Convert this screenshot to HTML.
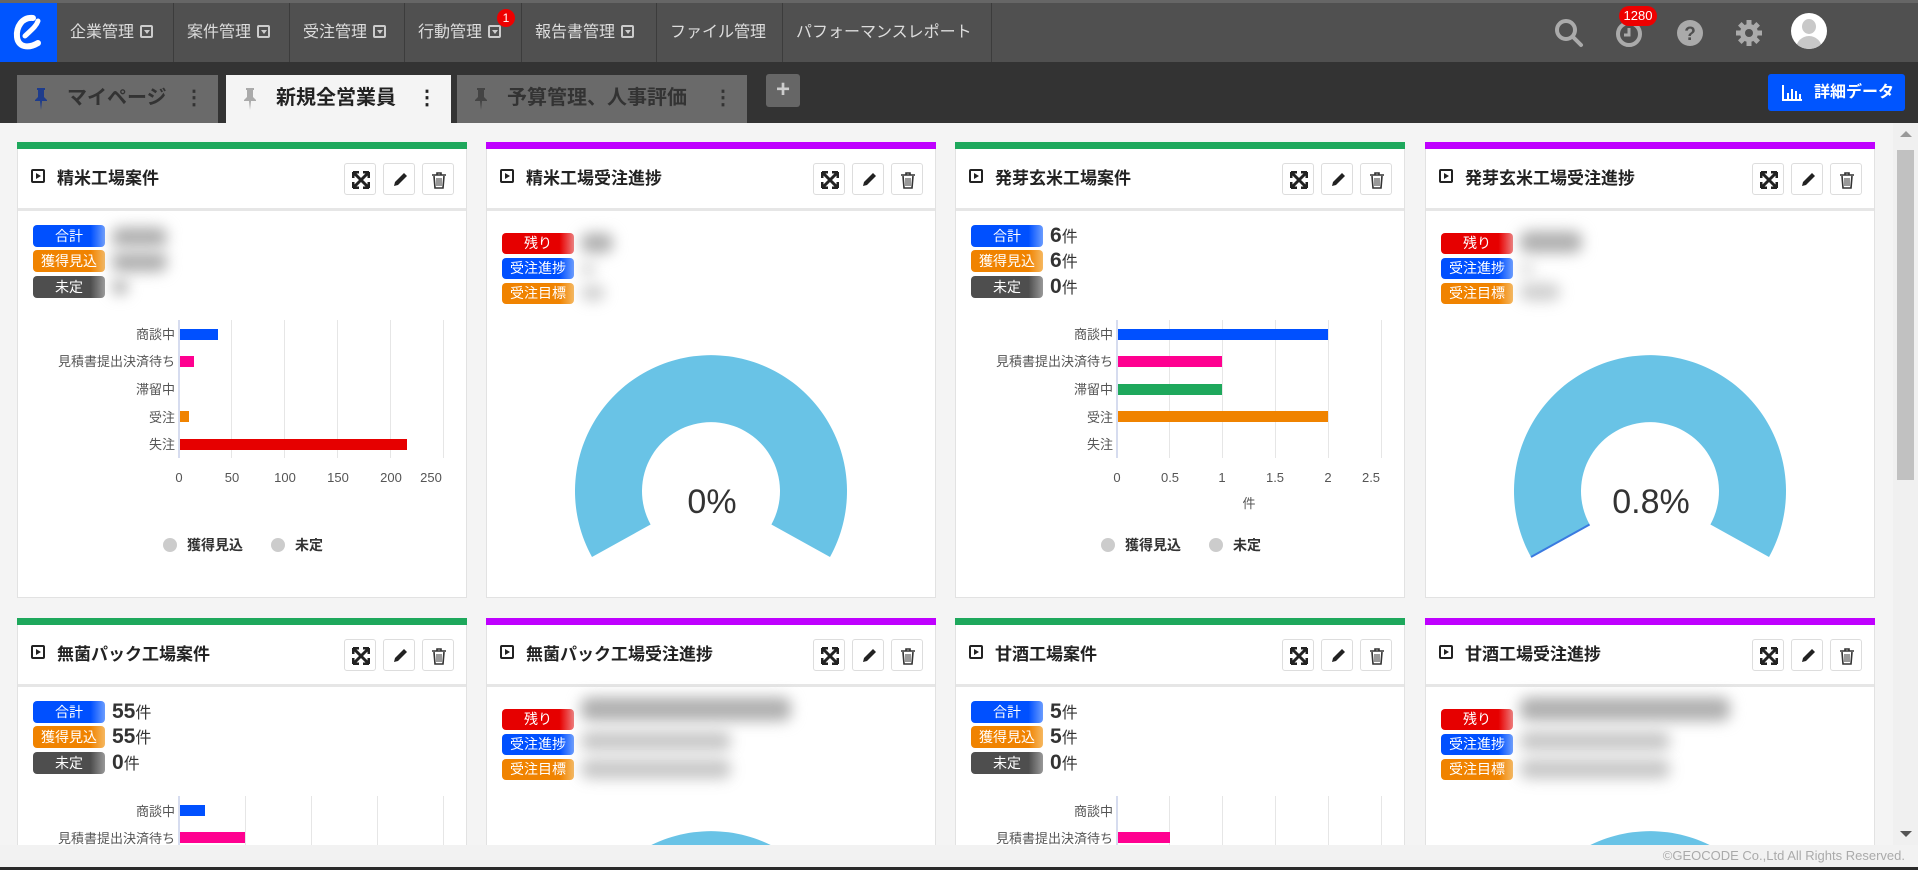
<!DOCTYPE html>
<html><head><meta charset="utf-8"><style>
*{box-sizing:border-box;margin:0;padding:0}
html,body{width:1918px;height:870px;overflow:hidden}
body{background:#f4f4f4;font-family:"Liberation Sans","Noto Sans CJK JP",sans-serif;position:relative;color:#333}
.nav{position:absolute;left:0;top:0;width:1918px;height:62px;background:#505050;border-top:3px solid #666}
.logo{position:absolute;left:0;top:0;width:57px;height:59px;background:#0055ff}
.ni{position:absolute;top:0;height:59px;line-height:59px;color:#ddd;font-size:16px;padding-left:13px;border-right:1px solid #3c3c3c}
.dd{display:inline-block;width:13px;height:13px;border:2px solid #ccc;border-radius:2px;vertical-align:-1px;margin-left:6px;position:relative}
.dd:after{content:"";position:absolute;left:2px;top:3px;border:3px solid transparent;border-top:4px solid #ccc}
.tabs{position:absolute;left:0;top:62px;width:1918px;height:61px;background:#333}
.tab{position:absolute;top:13px;height:48px;line-height:46px;font-size:20px;font-weight:bold;padding-left:50px}
.tab svg{position:absolute;left:18px;top:13px}
.tab .k{position:absolute;right:14px;top:0}
.sb{position:absolute;right:0;top:123px;width:25px;height:722px;background:#f0f0f0}
.card{position:absolute;width:450px;height:456px;background:#fff;border:1px solid #e2e2e2}
.bar{position:absolute;left:-1px;right:-1px;top:-1px;height:7px}
.hd{position:absolute;left:0;right:0;top:6px;height:62px;border-bottom:3px solid #e6e6e6}
.ttl{position:absolute;left:39px;top:15px;font-size:17px;font-weight:bold;color:#222}
.pi{position:absolute;left:13px;top:20px;width:14px;height:14px;border:2px solid #222;border-radius:2px}
.pi:after{content:"";position:absolute;left:3px;top:2px;border:3px solid transparent;border-left:5px solid #222}
.btn{position:absolute;top:14px;width:32px;height:32px;border:1px solid #ddd;border-radius:3px;background:#fff}
.btn svg{position:absolute;left:7px;top:7px}
.bd{position:absolute;left:15px;width:72px;height:22px;border-radius:4px;color:#fff;font-size:14px;text-align:center;line-height:22px}
.bl{background:linear-gradient(90deg,#0050ff 80%,#6a9cff)}.or{background:linear-gradient(90deg,#f08300 80%,#f6b860)}.dk{background:linear-gradient(90deg,#4e4e4e 80%,#999)}.rd{background:linear-gradient(90deg,#e60000 80%,#f07a7a)}
.cnt{position:absolute;left:94px;font-size:21px;font-weight:bold;color:#333;line-height:24px}
.cnt small{font-size:16px;font-weight:normal}
.blur{position:absolute;background:#b0b0b0;filter:blur(7px);border-radius:8px}
.lab{position:absolute;right:291px;font-size:13px;color:#555;text-align:right;white-space:nowrap;line-height:15px}
.grid{position:absolute;top:177px;width:1px;height:138px;background:#e6e6e6}
.ax{position:absolute;left:160px;top:177px;width:2px;height:138px;background:#d6dcef}
.tk{position:absolute;top:327px;font-size:13px;color:#555;transform:translateX(-50%)}
.hb{position:absolute;left:162px;height:11px}
.lg{position:absolute;top:392px;font-size:14px;color:#333;font-weight:bold}
.lg i{display:inline-block;width:14px;height:14px;border-radius:50%;background:#ccc;vertical-align:-2px;margin-right:10px}
.pct{position:absolute;left:0;width:450px;text-align:center;top:340px;font-size:34px;color:#333}
</style></head><body>
<div class="nav">
<div class="logo"><svg width="57" height="59" viewBox="0 0 57 59"><path d="M33 15 C22 14 16 24 17 34 C18 44 28 46 38 40" stroke="#fff" stroke-width="6" fill="none" stroke-linecap="round"/><path d="M25 33 C30 28 36 24 38 18" stroke="#fff" stroke-width="5" fill="none" stroke-linecap="round"/></svg></div>
<div class="ni" style="left:57px;width:117px">企業管理<span class="dd"></span></div>
<div class="ni" style="left:174px;width:116px">案件管理<span class="dd"></span></div>
<div class="ni" style="left:290px;width:115px">受注管理<span class="dd"></span></div>
<div class="ni" style="left:405px;width:117px">行動管理<span class="dd"></span></div>
<div style="position:absolute;left:497px;top:6px;width:18px;height:18px;border-radius:50%;background:#e00;color:#fff;font-size:12px;text-align:center;line-height:18px">1</div>
<div class="ni" style="left:522px;width:135px">報告書管理<span class="dd"></span></div>
<div class="ni" style="left:657px;width:126px">ファイル管理</div>
<div class="ni" style="left:783px;width:209px">パフォーマンスレポート</div>
<svg style="position:absolute;left:1554px;top:15px" width="30" height="30" viewBox="0 0 30 30"><circle cx="12" cy="12" r="9" stroke="#aaa" stroke-width="4" fill="none"/><path d="M19 19 L27 27" stroke="#aaa" stroke-width="4" stroke-linecap="round"/></svg>
<svg style="position:absolute;left:1615px;top:17px" width="28" height="28" viewBox="0 0 28 28"><circle cx="14" cy="14" r="11" stroke="#aaa" stroke-width="4" fill="none"/><path d="M14 8 V15 H9" stroke="#aaa" stroke-width="3" fill="none"/></svg>
<div style="position:absolute;left:1619px;top:3px;width:38px;height:20px;border-radius:10px;background:#e00;color:#fff;font-size:13px;text-align:center;line-height:20px">1280</div>
<svg style="position:absolute;left:1676px;top:16px" width="28" height="28" viewBox="0 0 28 28"><circle cx="14" cy="14" r="13" fill="#aaa"/><text x="14" y="21" text-anchor="middle" font-size="19" font-weight="bold" fill="#505050" font-family="Liberation Sans">?</text></svg>
<svg style="position:absolute;left:1735px;top:16px" width="28" height="28" viewBox="0 0 28 28"><g fill="#aaa"><circle cx="14" cy="14" r="9"/><g stroke="#aaa" stroke-width="5"><path d="M14 1V27M1 14H27M4.8 4.8L23.2 23.2M23.2 4.8L4.8 23.2"/></g></g><circle cx="14" cy="14" r="4" fill="#505050"/></svg>
<div style="position:absolute;left:1791px;top:10px;width:36px;height:36px;border-radius:50%;background:#fff;overflow:hidden"><div style="position:absolute;left:11px;top:6px;width:14px;height:15px;border-radius:50%;background:#c8c8c8"></div><div style="position:absolute;left:5px;top:23px;width:26px;height:20px;border-radius:13px 13px 0 0;background:#c8c8c8"></div></div>
</div>
<div class="tabs">
<div class="tab" style="left:17px;width:201px;background:#6a6a6a;color:#333"><svg width="12" height="22" viewBox="0 0 12 22"><path d="M2 0H10V2H9V9L12 12V13H0V12L3 9V2H2Z M5 13H7L6 22Z" fill="#1e3c8c"/></svg>マイページ<span class="k">⋮</span></div>
<div class="tab" style="left:226px;width:225px;background:#f4f4f4;color:#222"><svg width="12" height="22" viewBox="0 0 12 22"><path d="M2 0H10V2H9V9L12 12V13H0V12L3 9V2H2Z M5 13H7L6 22Z" fill="#aaa"/></svg>新規全営業員<span class="k">⋮</span></div>
<div class="tab" style="left:457px;width:290px;background:#6a6a6a;color:#333"><svg width="12" height="22" viewBox="0 0 12 22"><path d="M2 0H10V2H9V9L12 12V13H0V12L3 9V2H2Z M5 13H7L6 22Z" fill="#444"/></svg>予算管理、人事評価<span class="k">⋮</span></div>
<div style="position:absolute;left:766px;top:12px;width:34px;height:33px;background:#666;border-radius:3px;color:#ccc;font-size:24px;font-weight:bold;text-align:center;line-height:32px">+</div>
<div style="position:absolute;left:1768px;top:12px;width:137px;height:37px;background:#0055ff;border-radius:3px;color:#fff;font-size:16px;font-weight:bold;line-height:37px;padding-left:46px"><svg style="position:absolute;left:14px;top:11px" width="20" height="16" viewBox="0 0 20 16"><path d="M1 0V15H20" stroke="#fff" stroke-width="2" fill="none"/><path d="M5 8h2v6H5zM9 4h2v10H9zM13 6h2v8h-2zM17 9h2v5h-2z" fill="#fff"/></svg>詳細データ</div>
</div>
<div class="sb"><div style="position:absolute;left:7px;top:8px;border:6px solid transparent;border-bottom:6px solid #999;border-top:0"></div><div style="position:absolute;left:4px;top:27px;width:17px;height:330px;background:#c1c1c1"></div><div style="position:absolute;left:7px;top:708px;border:6px solid transparent;border-top:6px solid #555;border-bottom:0"></div></div>
<div style="position:absolute;left:0;top:123px;width:1893px;height:722px;overflow:hidden">
<!-- row 1 -->
<div class="card" style="left:17px;top:19px">
<div class="bar" style="background:#1ea85c"></div>
<div class="hd"><div class="pi"></div><div class="ttl">精米工場案件</div>
<div class="btn" style="left:326px"><svg width="18" height="18" viewBox="0 0 18 18"><path d="M2 2L16 16M16 2L2 16M1 1h6M1 1v6M17 1h-6M17 1v6M1 17h6M1 17v-6M17 17h-6M17 17v-6" stroke="#222" stroke-width="3"/></svg></div>
<div class="btn" style="left:365px"><svg width="18" height="18" viewBox="0 0 18 18"><path d="M3 15L4 11L13 2L16 5L7 14Z" fill="#222"/></svg></div>
<div class="btn" style="left:404px"><svg width="18" height="18" viewBox="0 0 18 18"><path d="M2 4H16M7 4V2H11V4M4 5L5 17H13L14 5" stroke="#333" stroke-width="1.6" fill="none"/><path d="M7 7V15M9 7V15M11 7V15" stroke="#333" stroke-width="1"/></svg></div></div>
<div class="bd bl" style="top:82px">合計</div><div class="bd or" style="top:107px">獲得見込</div><div class="bd dk" style="top:133px">未定</div>
<div class="blur" style="left:94px;top:84px;width:55px;height:20px"></div><div class="blur" style="left:94px;top:109px;width:55px;height:20px"></div><div class="blur" style="left:94px;top:136px;width:16px;height:16px"></div>
<div class="lab" style="top:184px">商談中</div><div class="lab" style="top:211px">見積書提出決済待ち</div><div class="lab" style="top:239px">滞留中</div><div class="lab" style="top:267px">受注</div><div class="lab" style="top:294px">失注</div>
<div class="grid" style="left:213px"></div><div class="grid" style="left:266px"></div><div class="grid" style="left:319px"></div><div class="grid" style="left:372px"></div><div class="grid" style="left:425px"></div>
<div class="ax"></div>
<div class="hb" style="top:186px;width:38px;background:#0050ff"></div><div class="hb" style="top:213px;width:14px;background:#ff0090"></div><div class="hb" style="top:268px;width:9px;background:#f08300"></div><div class="hb" style="top:296px;width:227px;background:#e60000"></div>
<div class="tk" style="left:161px">0</div><div class="tk" style="left:214px">50</div><div class="tk" style="left:267px">100</div><div class="tk" style="left:320px">150</div><div class="tk" style="left:373px">200</div><div class="tk" style="left:413px">250</div>
<div class="lg" style="left:145px"><i></i>獲得見込</div><div class="lg" style="left:253px"><i></i>未定</div>
</div>

<div class="card" style="left:486px;top:19px">
<div class="bar" style="background:#bf00ff"></div>
<div class="hd"><div class="pi"></div><div class="ttl">精米工場受注進捗</div>
<div class="btn" style="left:326px"><svg width="18" height="18" viewBox="0 0 18 18"><path d="M2 2L16 16M16 2L2 16M1 1h6M1 1v6M17 1h-6M17 1v6M1 17h6M1 17v-6M17 17h-6M17 17v-6" stroke="#222" stroke-width="3"/></svg></div>
<div class="btn" style="left:365px"><svg width="18" height="18" viewBox="0 0 18 18"><path d="M3 15L4 11L13 2L16 5L7 14Z" fill="#222"/></svg></div>
<div class="btn" style="left:404px"><svg width="18" height="18" viewBox="0 0 18 18"><path d="M2 4H16M7 4V2H11V4M4 5L5 17H13L14 5" stroke="#333" stroke-width="1.6" fill="none"/><path d="M7 7V15M9 7V15M11 7V15" stroke="#333" stroke-width="1"/></svg></div></div>
<div class="bd rd" style="top:90px;height:21px;line-height:21px">残り</div><div class="bd bl" style="top:115px;height:21px;line-height:21px">受注進捗</div><div class="bd or" style="top:140px;height:21px;line-height:21px">受注目標</div>
<div class="blur" style="left:94px;top:90px;width:32px;height:20px"></div><div class="blur" style="left:94px;top:118px;width:14px;height:16px;opacity:.5"></div><div class="blur" style="left:94px;top:142px;width:24px;height:16px;opacity:.6"></div>
<svg style="position:absolute;left:0;top:0" width="450" height="456"><path d="M105 414 A136 136 0 1 1 343 414 L284.4 381.5 A69 69 0 1 0 163.6 381.5 Z" fill="#69c3e6"/></svg>
<div class="pct">0%</div>
</div>

<div class="card" style="left:955px;top:19px">
<div class="bar" style="background:#1ea85c"></div>
<div class="hd"><div class="pi"></div><div class="ttl">発芽玄米工場案件</div>
<div class="btn" style="left:326px"><svg width="18" height="18" viewBox="0 0 18 18"><path d="M2 2L16 16M16 2L2 16M1 1h6M1 1v6M17 1h-6M17 1v6M1 17h6M1 17v-6M17 17h-6M17 17v-6" stroke="#222" stroke-width="3"/></svg></div>
<div class="btn" style="left:365px"><svg width="18" height="18" viewBox="0 0 18 18"><path d="M3 15L4 11L13 2L16 5L7 14Z" fill="#222"/></svg></div>
<div class="btn" style="left:404px"><svg width="18" height="18" viewBox="0 0 18 18"><path d="M2 4H16M7 4V2H11V4M4 5L5 17H13L14 5" stroke="#333" stroke-width="1.6" fill="none"/><path d="M7 7V15M9 7V15M11 7V15" stroke="#333" stroke-width="1"/></svg></div></div>
<div class="bd bl" style="top:82px">合計</div><div class="bd or" style="top:107px">獲得見込</div><div class="bd dk" style="top:133px">未定</div>
<div class="cnt" style="top:81px">6<small>件</small></div><div class="cnt" style="top:106px">6<small>件</small></div><div class="cnt" style="top:132px">0<small>件</small></div>
<div class="lab" style="top:184px">商談中</div><div class="lab" style="top:211px">見積書提出決済待ち</div><div class="lab" style="top:239px">滞留中</div><div class="lab" style="top:267px">受注</div><div class="lab" style="top:294px">失注</div>
<div class="grid" style="left:213px"></div><div class="grid" style="left:266px"></div><div class="grid" style="left:319px"></div><div class="grid" style="left:372px"></div><div class="grid" style="left:425px"></div>
<div class="ax"></div>
<div class="hb" style="top:186px;width:210px;background:#0050ff"></div><div class="hb" style="top:213px;width:104px;background:#ff0090"></div><div class="hb" style="top:241px;width:104px;background:#1ea85c"></div><div class="hb" style="top:268px;width:210px;background:#f08300"></div>
<div class="tk" style="left:161px">0</div><div class="tk" style="left:214px">0.5</div><div class="tk" style="left:266px">1</div><div class="tk" style="left:319px">1.5</div><div class="tk" style="left:372px">2</div><div class="tk" style="left:415px">2.5</div>
<div class="tk" style="left:293px;top:350px">件</div>
<div class="lg" style="left:145px"><i></i>獲得見込</div><div class="lg" style="left:253px"><i></i>未定</div>
</div>

<div class="card" style="left:1425px;top:19px">
<div class="bar" style="background:#bf00ff"></div>
<div class="hd"><div class="pi"></div><div class="ttl">発芽玄米工場受注進捗</div>
<div class="btn" style="left:326px"><svg width="18" height="18" viewBox="0 0 18 18"><path d="M2 2L16 16M16 2L2 16M1 1h6M1 1v6M17 1h-6M17 1v6M1 17h6M1 17v-6M17 17h-6M17 17v-6" stroke="#222" stroke-width="3"/></svg></div>
<div class="btn" style="left:365px"><svg width="18" height="18" viewBox="0 0 18 18"><path d="M3 15L4 11L13 2L16 5L7 14Z" fill="#222"/></svg></div>
<div class="btn" style="left:404px"><svg width="18" height="18" viewBox="0 0 18 18"><path d="M2 4H16M7 4V2H11V4M4 5L5 17H13L14 5" stroke="#333" stroke-width="1.6" fill="none"/><path d="M7 7V15M9 7V15M11 7V15" stroke="#333" stroke-width="1"/></svg></div></div>
<div class="bd rd" style="top:90px;height:21px;line-height:21px">残り</div><div class="bd bl" style="top:115px;height:21px;line-height:21px">受注進捗</div><div class="bd or" style="top:140px;height:21px;line-height:21px">受注目標</div>
<div class="blur" style="left:94px;top:88px;width:62px;height:22px"></div><div class="blur" style="left:94px;top:118px;width:14px;height:16px;opacity:.4"></div><div class="blur" style="left:94px;top:140px;width:40px;height:18px;opacity:.6"></div>
<svg style="position:absolute;left:0;top:0" width="450" height="456"><path d="M105 414 A136 136 0 1 1 343 414 L284.4 381.5 A69 69 0 1 0 163.6 381.5 Z" fill="#69c3e6"/><path d="M105 414 L163.6 381.5" stroke="#3a7ae0" stroke-width="2"/></svg>
<div class="pct">0.8%</div>
</div>

<!-- row 2 -->
<div class="card" style="left:17px;top:495px">
<div class="bar" style="background:#1ea85c"></div>
<div class="hd"><div class="pi"></div><div class="ttl">無菌パック工場案件</div>
<div class="btn" style="left:326px"><svg width="18" height="18" viewBox="0 0 18 18"><path d="M2 2L16 16M16 2L2 16M1 1h6M1 1v6M17 1h-6M17 1v6M1 17h6M1 17v-6M17 17h-6M17 17v-6" stroke="#222" stroke-width="3"/></svg></div>
<div class="btn" style="left:365px"><svg width="18" height="18" viewBox="0 0 18 18"><path d="M3 15L4 11L13 2L16 5L7 14Z" fill="#222"/></svg></div>
<div class="btn" style="left:404px"><svg width="18" height="18" viewBox="0 0 18 18"><path d="M2 4H16M7 4V2H11V4M4 5L5 17H13L14 5" stroke="#333" stroke-width="1.6" fill="none"/><path d="M7 7V15M9 7V15M11 7V15" stroke="#333" stroke-width="1"/></svg></div></div>
<div class="bd bl" style="top:82px">合計</div><div class="bd or" style="top:107px">獲得見込</div><div class="bd dk" style="top:133px">未定</div>
<div class="cnt" style="top:81px">55<small>件</small></div><div class="cnt" style="top:106px">55<small>件</small></div><div class="cnt" style="top:132px">0<small>件</small></div>
<div class="lab" style="top:185px">商談中</div><div class="lab" style="top:212px">見積書提出決済待ち</div>
<div class="grid" style="left:227px"></div><div class="grid" style="left:293px"></div><div class="grid" style="left:359px"></div><div class="grid" style="left:425px"></div>
<div class="ax"></div>
<div class="hb" style="top:186px;width:25px;background:#0050ff"></div><div class="hb" style="top:213px;width:65px;background:#ff0090"></div>
</div>

<div class="card" style="left:486px;top:495px">
<div class="bar" style="background:#bf00ff"></div>
<div class="hd"><div class="pi"></div><div class="ttl">無菌パック工場受注進捗</div>
<div class="btn" style="left:326px"><svg width="18" height="18" viewBox="0 0 18 18"><path d="M2 2L16 16M16 2L2 16M1 1h6M1 1v6M17 1h-6M17 1v6M1 17h6M1 17v-6M17 17h-6M17 17v-6" stroke="#222" stroke-width="3"/></svg></div>
<div class="btn" style="left:365px"><svg width="18" height="18" viewBox="0 0 18 18"><path d="M3 15L4 11L13 2L16 5L7 14Z" fill="#222"/></svg></div>
<div class="btn" style="left:404px"><svg width="18" height="18" viewBox="0 0 18 18"><path d="M2 4H16M7 4V2H11V4M4 5L5 17H13L14 5" stroke="#333" stroke-width="1.6" fill="none"/><path d="M7 7V15M9 7V15M11 7V15" stroke="#333" stroke-width="1"/></svg></div></div>
<div class="bd rd" style="top:90px;height:21px;line-height:21px">残り</div><div class="bd bl" style="top:115px;height:21px;line-height:21px">受注進捗</div><div class="bd or" style="top:140px;height:21px;line-height:21px">受注目標</div>
<div class="blur" style="left:94px;top:78px;width:210px;height:24px"></div><div class="blur" style="left:94px;top:112px;width:150px;height:20px;opacity:.7"></div><div class="blur" style="left:94px;top:140px;width:150px;height:20px;opacity:.7"></div>
<svg style="position:absolute;left:0;top:0" width="450" height="456"><path d="M105 414 A136 136 0 1 1 343 414 L284.4 381.5 A69 69 0 1 0 163.6 381.5 Z" fill="#69c3e6"/></svg>
</div>

<div class="card" style="left:955px;top:495px">
<div class="bar" style="background:#1ea85c"></div>
<div class="hd"><div class="pi"></div><div class="ttl">甘酒工場案件</div>
<div class="btn" style="left:326px"><svg width="18" height="18" viewBox="0 0 18 18"><path d="M2 2L16 16M16 2L2 16M1 1h6M1 1v6M17 1h-6M17 1v6M1 17h6M1 17v-6M17 17h-6M17 17v-6" stroke="#222" stroke-width="3"/></svg></div>
<div class="btn" style="left:365px"><svg width="18" height="18" viewBox="0 0 18 18"><path d="M3 15L4 11L13 2L16 5L7 14Z" fill="#222"/></svg></div>
<div class="btn" style="left:404px"><svg width="18" height="18" viewBox="0 0 18 18"><path d="M2 4H16M7 4V2H11V4M4 5L5 17H13L14 5" stroke="#333" stroke-width="1.6" fill="none"/><path d="M7 7V15M9 7V15M11 7V15" stroke="#333" stroke-width="1"/></svg></div></div>
<div class="bd bl" style="top:82px">合計</div><div class="bd or" style="top:107px">獲得見込</div><div class="bd dk" style="top:133px">未定</div>
<div class="cnt" style="top:81px">5<small>件</small></div><div class="cnt" style="top:106px">5<small>件</small></div><div class="cnt" style="top:132px">0<small>件</small></div>
<div class="lab" style="top:185px">商談中</div><div class="lab" style="top:212px">見積書提出決済待ち</div>
<div class="grid" style="left:213px"></div><div class="grid" style="left:266px"></div><div class="grid" style="left:319px"></div><div class="grid" style="left:372px"></div><div class="grid" style="left:425px"></div>
<div class="ax"></div>
<div class="hb" style="top:213px;width:52px;background:#ff0090"></div>
</div>

<div class="card" style="left:1425px;top:495px">
<div class="bar" style="background:#bf00ff"></div>
<div class="hd"><div class="pi"></div><div class="ttl">甘酒工場受注進捗</div>
<div class="btn" style="left:326px"><svg width="18" height="18" viewBox="0 0 18 18"><path d="M2 2L16 16M16 2L2 16M1 1h6M1 1v6M17 1h-6M17 1v6M1 17h6M1 17v-6M17 17h-6M17 17v-6" stroke="#222" stroke-width="3"/></svg></div>
<div class="btn" style="left:365px"><svg width="18" height="18" viewBox="0 0 18 18"><path d="M3 15L4 11L13 2L16 5L7 14Z" fill="#222"/></svg></div>
<div class="btn" style="left:404px"><svg width="18" height="18" viewBox="0 0 18 18"><path d="M2 4H16M7 4V2H11V4M4 5L5 17H13L14 5" stroke="#333" stroke-width="1.6" fill="none"/><path d="M7 7V15M9 7V15M11 7V15" stroke="#333" stroke-width="1"/></svg></div></div>
<div class="bd rd" style="top:90px;height:21px;line-height:21px">残り</div><div class="bd bl" style="top:115px;height:21px;line-height:21px">受注進捗</div><div class="bd or" style="top:140px;height:21px;line-height:21px">受注目標</div>
<div class="blur" style="left:94px;top:78px;width:210px;height:24px"></div><div class="blur" style="left:94px;top:112px;width:150px;height:20px;opacity:.7"></div><div class="blur" style="left:94px;top:140px;width:150px;height:20px;opacity:.7"></div>
<svg style="position:absolute;left:0;top:0" width="450" height="456"><path d="M105 414 A136 136 0 1 1 343 414 L284.4 381.5 A69 69 0 1 0 163.6 381.5 Z" fill="#69c3e6"/></svg>
</div>
</div>
<div style="position:absolute;left:0;top:845px;width:1918px;height:22px;background:#f2f2f2;text-align:right;padding-right:13px;font-size:13px;line-height:22px;color:#aaa">©GEOCODE Co.,Ltd All Rights Reserved.</div>
<div style="position:absolute;left:0;top:867px;width:1918px;height:3px;background:#2a2a2a"></div>
</body></html>
